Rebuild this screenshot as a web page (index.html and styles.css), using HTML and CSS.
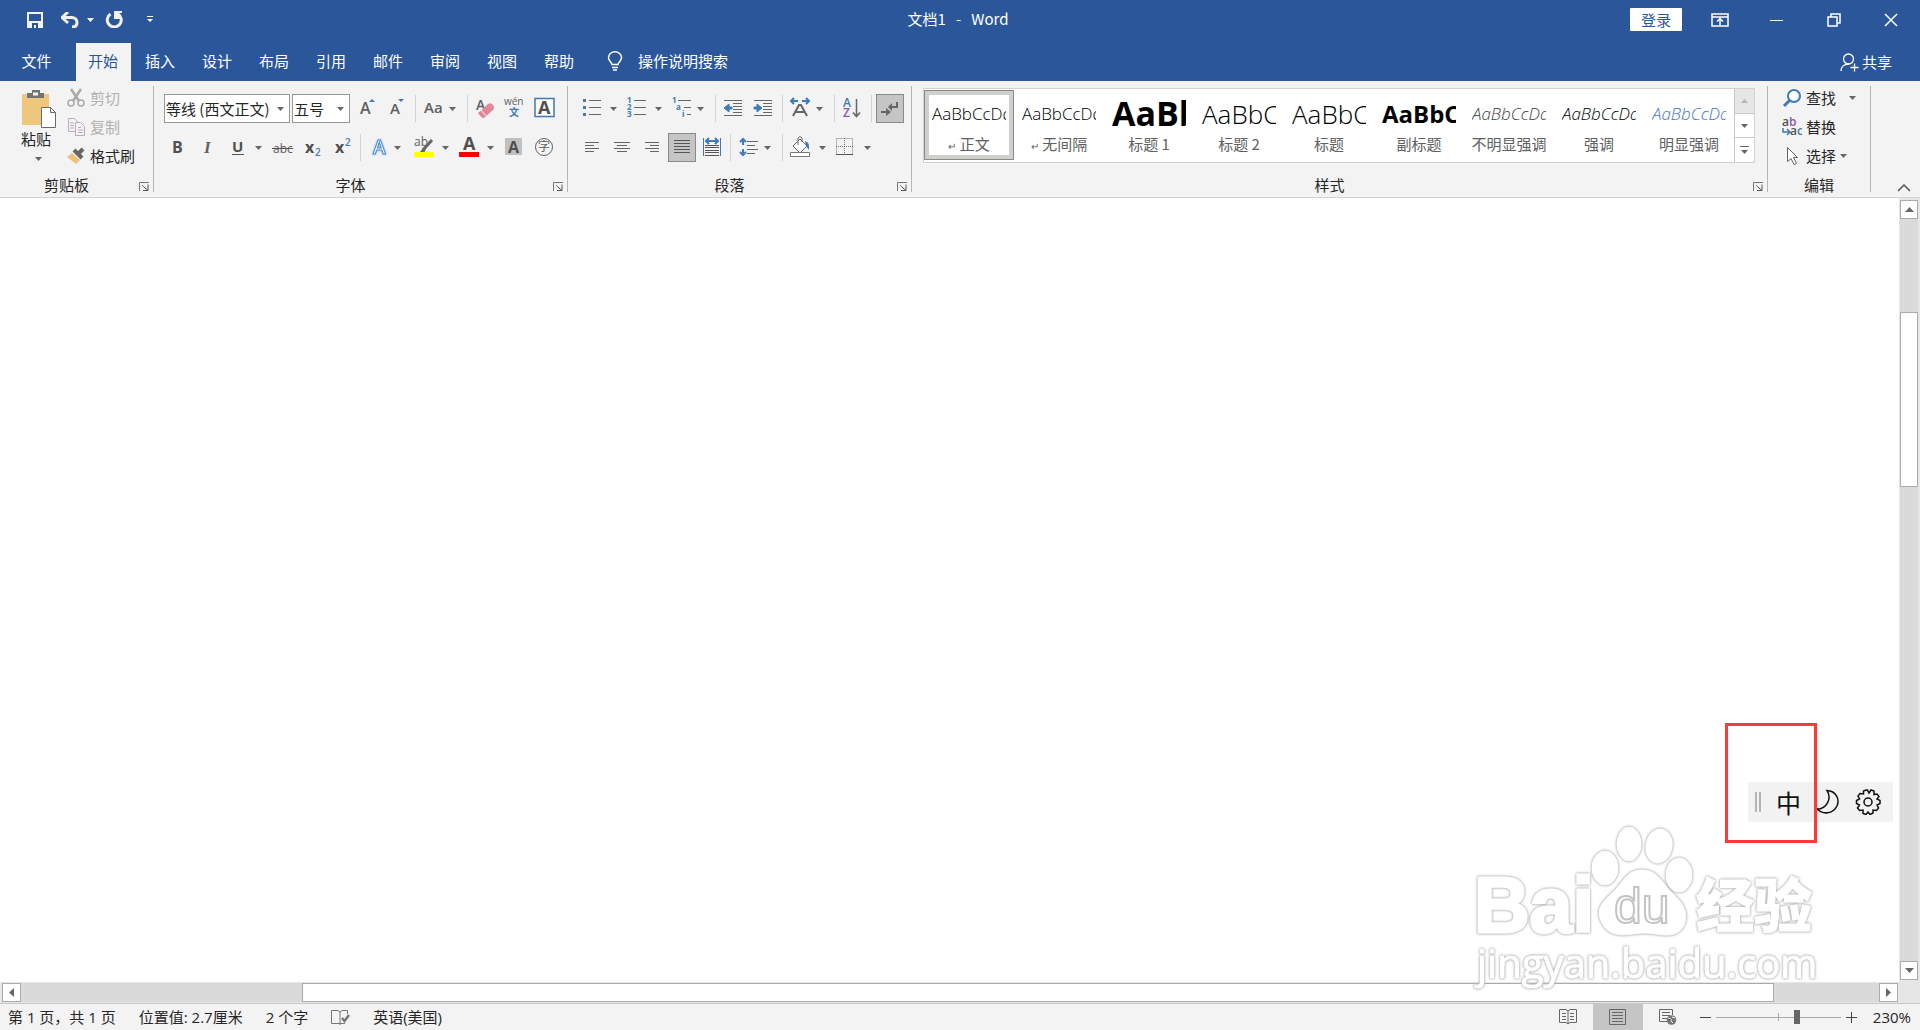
FILE: index.html
```html
<!DOCTYPE html>
<html lang="zh-CN">
<head>
<meta charset="utf-8">
<title>文档1 - Word</title>
<link rel="stylesheet" href="styles.css">
</head>
<body>
<svg class="defs" aria-hidden="true">
  <symbol id="caret" viewBox="0 0 7 4"><path d="M0 0h7L3.500 4z" fill="currentColor"/></symbol>
  <symbol id="launch" viewBox="0 0 10 9"><path d="M.5 9V.5H10M3 3l4 4" fill="none" stroke="#777"/><path d="M9 2.500V8.500H4M5 5l4 3.500" fill="none" stroke="#555"/></symbol>
</svg>

<header class="titlebar">
  <div class="quick">
    <button class="ghost save" aria-label="保存"><svg width="16" height="16"><path d="M1 1h14v14H1z" fill="none" stroke="#f2f2f2" stroke-width="2"/><path d="M2 9h12v6H2z" fill="#f2f2f2"/><path d="M5 11h6v5H9v-3H7v3H5z" fill="#2b579a"/></svg></button>
    <button class="ghost undo" aria-label="撤消"><svg width="18" height="16"><path d="M3 5.500h8q5 .5 5 5t-5 4.500" fill="none" stroke="#f2f2f2" stroke-width="3"/><path d="M7 0 1 5.500 7 11" fill="none" stroke="#f2f2f2" stroke-width="3"/></svg></button>
    <button class="ghost undo-more" aria-label="撤消列表"><svg width="7" height="4"><use href="#caret"/></svg></button>
    <button class="ghost redo" aria-label="重复"><svg width="18" height="17"><path d="M5.500 3A7 7 0 1 0 13 3" fill="none" stroke="#f2f2f2" stroke-width="3"/><path d="M9 0h8v2h-3l2 6H9z" fill="#f2f2f2"/></svg></button>
    <button class="ghost" aria-label="自定义快速访问工具栏"><svg width="6" height="7"><path d="M0 .5h6" stroke="#fff"/><path d="M0 3h6L3 6z" fill="#fff"/></svg></button>
  </div>
  <h1 class="doc-title">文档1 &nbsp;&nbsp;-&nbsp;&nbsp; Word</h1>
  <div class="window-tools">
    <button class="signin">登录</button>
    <button class="ghost win" aria-label="功能区显示选项"><svg width="18" height="14"><path d="M1 1h16v12H1zM1 4h16" fill="none" stroke="#fff" stroke-width="1.500"/><path d="M9 12V6M6 8.500 9 5.500l3 3" fill="none" stroke="#fff" stroke-width="1.500"/></svg></button>
    <button class="ghost win" aria-label="最小化"><svg width="14" height="14"><path d="M0 7.500h13" stroke="#fff"/></svg></button>
    <button class="ghost win" aria-label="还原"><svg width="14" height="14"><path d="M1 4h9v9H1zM4 4V1h9v9h-3" fill="none" stroke="#fff" stroke-width="1.500"/></svg></button>
    <button class="ghost win" aria-label="关闭"><svg width="14" height="14"><path d="m1 1 12 12M13 1 1 13" stroke="#fff" stroke-width="1.500"/></svg></button>
  </div>
</header>

<nav class="tabs">
  <button class="tab file">文件</button>
  <button class="tab active">开始</button>
  <button class="tab">插入</button>
  <button class="tab">设计</button>
  <button class="tab">布局</button>
  <button class="tab">引用</button>
  <button class="tab">邮件</button>
  <button class="tab">审阅</button>
  <button class="tab">视图</button>
  <button class="tab">帮助</button>
  <label class="tell-me">
    <svg width="16" height="20"><path d="M5 13.500C4.500 10.500 1.500 10 1.500 6.500a6.500 5.700 0 0 1 13 0c0 3.500-3 4-3.500 7z" fill="none" stroke="#fff" stroke-width="1.500"/><path d="M5 16.500h6M6 19h4" stroke="#fff" stroke-width="1.500"/></svg>
    <input type="text" placeholder="操作说明搜索" aria-label="操作说明搜索">
  </label>
  <button class="share"><svg width="19" height="19"><circle cx="8.500" cy="6" r="5" fill="none" stroke="#fff" stroke-width="1.300"/><path d="M1 18c0-4 3-7 8-7M14.500 10.500v8M10.500 14.500h8" fill="none" stroke="#fff" stroke-width="1.300"/></svg>共享</button>
</nav>

<section class="ribbon" aria-label="开始">
  <div class="group clipboard">
    <div class="clip-body">
      <button class="paste"><svg width="36" height="40"><path d="M1 5h27v31H1z" fill="#eec77d"/><path d="M6 9V4h5V1h8v3h4v5z" fill="#737373"/><path d="M12 3.500h5v3h-5z" fill="#f3f3f3"/><path d="M20.500 18.500h9l5 5v15h-14z" fill="#fff" stroke="#6b6b6b"/><path d="M29.500 18.500v5h5" fill="none" stroke="#6b6b6b"/></svg>粘贴<svg class="paste-caret" width="7" height="4"><use href="#caret"/></svg></button>
      <div class="stack">
        <button class="line" disabled><svg width="18" height="20"><path d="m4 1 8 12M14 1 6 13" stroke="#aaa" stroke-width="2.500"/><circle cx="4" cy="15" r="3" fill="none" stroke="#aaa" stroke-width="1.500"/><circle cx="14" cy="15" r="3" fill="none" stroke="#aaa" stroke-width="1.500"/></svg>剪切</button>
        <button class="line" disabled><svg width="18" height="20"><path d="M1.500 1.500h6l3 3v10h-9z" fill="#f5f2f5" stroke="#b9adb9"/><path d="M8.500 5.500h5l4 4v9h-9z" fill="#f5f2f5" stroke="#b9adb9"/><path d="M3 6h4M3 8.500h4M3 11h4M11 10.500h3M11 13h5M11 15.500h5" stroke="#b9adb9"/></svg>复制</button>
        <button class="line"><svg width="18" height="20"><path d="m0 11 5-4 8 7-4 4z" fill="#eec07c"/><path d="m7 4 8 8" stroke="#666" stroke-width="4"/><path d="m11 8 5-5" stroke="#666" stroke-width="4"/></svg>格式刷</button>
      </div>
    </div>
    <div class="group-label with-launcher">剪贴板<button class="launcher" aria-label="剪贴板设置"><svg width="10" height="9"><use href="#launch"/></svg></button></div>
  </div>

  <div class="group font">
    <div class="rows">
      <div class="row">
        <span class="combo family"><select aria-label="字体"><option>等线 (西文正文)</option></select><svg width="7" height="4"><use href="#caret"/></svg></span>
        <span class="combo size"><select aria-label="字号"><option>五号</option></select><svg width="7" height="4"><use href="#caret"/></svg></span>
        <button class="tool" aria-label="增大字号"><svg width="30" height="29"><text x="8" y="20" class="g16">A</text><path d="m17 8 3-3 3 3z" fill="#3f7ab5"/></svg></button>
        <button class="tool" aria-label="减小字号"><svg width="30" height="29"><text x="8" y="20" class="g15">A</text><path d="m16 5 3 3 3-3z" fill="#3f7ab5"/></svg></button>
        <i class="sep"></i>
        <button class="tool" aria-label="更改大小写"><svg width="30" height="29"><text x="5" y="19" class="g15">Aa</text></svg></button><button class="drop tight" aria-label="大小写选项"><svg width="7" height="4"><use href="#caret"/></svg></button>
        <i class="sep"></i>
        <button class="tool" aria-label="清除格式"><svg width="30" height="29"><text x="5" y="16" class="g14">A</text><path d="m7 19 10-9q3-2 5 1t0 5l-9 8q-3 0-6-5z" fill="#e58699"/><path d="m10 16 5 6" stroke="#f3f3f3"/></svg></button>
        <button class="tool" aria-label="拼音指南"><svg width="30" height="29"><text x="3" y="11" class="g10">wén</text><text x="8" y="22" class="b10">文</text></svg></button>
        <button class="tool" aria-label="字符边框"><svg width="30" height="29"><path d="M4 4.500h19v18H4z" fill="#fff" stroke="#3f7ab5" stroke-width="1.500"/><text x="7" y="20" class="g17 bold">A</text></svg></button>
      </div>
      <div class="row">
        <button class="tool" aria-label="加粗"><svg width="30" height="29"><text x="10" y="20" class="g16 bold">B</text></svg></button>
        <button class="tool" aria-label="倾斜"><svg width="30" height="29"><text x="12" y="20" class="serif">I</text></svg></button>
        <button class="tool" aria-label="下划线"><svg width="30" height="29"><text x="10" y="19" class="g15 bold">U</text><path d="M10 21.500h12" stroke="#555"/></svg></button><button class="drop" aria-label="下划线样式"><svg width="7" height="4"><use href="#caret"/></svg></button>
        <button class="tool" aria-label="删除线"><svg width="30" height="29"><text x="6" y="20" class="g12">abc</text><path d="M5 15.500h21" stroke="#555"/></svg></button>
        <button class="tool" aria-label="下标"><svg width="30" height="29"><text x="8" y="20" class="g16 bold">x</text><text x="18" y="23" class="b10">2</text></svg></button>
        <button class="tool" aria-label="上标"><svg width="30" height="29"><text x="8" y="20" class="g16 bold">x</text><text x="18" y="13" class="b10">2</text></svg></button>
        <i class="sep"></i>
        <button class="tool" aria-label="文本效果"><svg width="30" height="29"><text x="9" y="21" class="effect">A</text></svg></button><button class="drop tight" aria-label="文本效果选项"><svg width="7" height="4"><use href="#caret"/></svg></button>
        <button class="tool" aria-label="突出显示"><svg width="30" height="29"><text x="5" y="13" class="g12">ab</text><path d="m23 7-9 10" stroke="#666" stroke-width="3"/><path d="m15 14-5 6h5l2-4z" fill="#666"/><path d="M5 19h20v5H5z" fill="#ff0"/></svg></button><button class="drop" aria-label="突出显示颜色"><svg width="7" height="4"><use href="#caret"/></svg></button>
        <button class="tool" aria-label="字体颜色"><svg width="30" height="29"><text x="9" y="17" class="g17 bold">A</text><path d="M5 19h20v5H5z" fill="red"/></svg></button><button class="drop" aria-label="字体颜色选项"><svg width="7" height="4"><use href="#caret"/></svg></button>
        <button class="tool" aria-label="字符底纹"><svg width="30" height="29"><path d="M6 5h17v17H6z" fill="#c0c0c0"/><text x="9" y="20" class="g16 bold">A</text></svg></button>
        <button class="tool" aria-label="带圈字符"><svg width="30" height="29"><circle cx="15" cy="14" r="8.500" fill="none" stroke="#666"/><text x="9" y="18" class="g12">字</text></svg></button>
      </div>
    </div>
    <div class="group-label with-launcher">字体<button class="launcher" aria-label="字体设置"><svg width="10" height="9"><use href="#launch"/></svg></button></div>
  </div>

  <div class="group para">
    <div class="rows">
      <div class="row">
        <button class="tool" aria-label="项目符号"><svg width="30" height="29"><path d="M12 6.500h12M12 13.500h12M12 20.500h12" stroke="#666"/><path d="M6 5h3v3H6zM6 12h3v3H6zM6 19h3v3H6z" fill="#3f7ab5"/></svg></button><button class="drop" aria-label="项目符号库"><svg width="7" height="4"><use href="#caret"/></svg></button>
        <button class="tool" aria-label="编号"><svg width="30" height="29"><path d="M12 6.500h12M12 13.500h12M12 20.500h12" stroke="#666"/><text x="5" y="9" class="b7">1</text><text x="5" y="16" class="b7">2</text><text x="5" y="23" class="b7">3</text></svg></button><button class="drop" aria-label="编号库"><svg width="7" height="4"><use href="#caret"/></svg></button>
        <button class="tool" aria-label="多级列表"><svg width="30" height="29"><path d="M11 6.500h13M17 13.500h7M20 20.500h4" stroke="#666"/><text x="5" y="9" class="b7">1</text><text x="9" y="16" class="b7">a</text><text x="15" y="23" class="b7">i</text></svg></button><button class="drop tight" aria-label="多级列表库"><svg width="7" height="4"><use href="#caret"/></svg></button>
        <i class="sep"></i>
        <button class="tool" aria-label="减少缩进量"><svg width="30" height="29"><path d="M5 6.500h18M14 9.500h9M14 12.500h9M14 15.500h9M14 18.500h9M5 21.500h18" stroke="#666"/><path d="m5 14 5-4v3h3v2h-3v3z" fill="#3f7ab5" stroke="#3f7ab5"/></svg></button>
        <button class="tool" aria-label="增加缩进量"><svg width="30" height="29"><path d="M5 6.500h18M14 9.500h9M14 12.500h9M14 15.500h9M14 18.500h9M5 21.500h18" stroke="#666"/><path d="m13 14-5-4v3H5v2h3v3z" fill="#3f7ab5" stroke="#3f7ab5"/></svg></button>
        <i class="sep"></i>
        <button class="tool" aria-label="中文版式"><svg width="30" height="29"><path d="m7 22 6-11h2l6 11M9.500 18h9" fill="none" stroke="#666" stroke-width="2"/><path d="M5 7h7M16 7h7M8 4 5 7l3 3M20 4l3 3-3 3" fill="none" stroke="#3f7ab5" stroke-width="2"/></svg></button><button class="drop tight" aria-label="中文版式选项"><svg width="7" height="4"><use href="#caret"/></svg></button>
        <i class="sep"></i>
        <button class="tool" aria-label="排序"><svg width="30" height="29"><text x="5" y="13" class="b12">A</text><text x="5" y="23" class="p12">Z</text><path d="M18.500 5v17M15 18.500l3.500 4 3.500-4" fill="none" stroke="#666" stroke-width="1.500"/></svg></button>
        <i class="sep"></i>
        <button class="tool pressed" aria-label="显示编辑标记" aria-pressed="true"><svg width="26" height="27"><path d="M20 7v5h-7M4 17h6" fill="none" stroke="#666" stroke-width="2"/><path d="m15 8-4 4 4 4zM9 13l5 4-5 4z" fill="#666"/></svg></button>
      </div>
      <div class="row">
        <button class="tool" aria-label="左对齐"><svg width="30" height="29"><path d="M8 9.500h14M8 12.500h9M8 15.500h14M8 18.500h9" stroke="#666"/></svg></button>
        <button class="tool" aria-label="居中"><svg width="30" height="29"><path d="M7 9.500h16M10 12.500h10M7 15.500h16M10 18.500h10" stroke="#666"/></svg></button>
        <button class="tool" aria-label="右对齐"><svg width="30" height="29"><path d="M8 9.500h14M13 12.500h9M8 15.500h14M13 18.500h9" stroke="#666"/></svg></button>
        <button class="tool pressed" aria-label="两端对齐" aria-pressed="true"><svg width="26" height="27"><path d="M5 6.500h16M5 9.500h16M5 12.500h16M5 15.500h16M5 18.500h16" stroke="#555"/></svg></button>
        <button class="tool" aria-label="分散对齐"><svg width="30" height="29"><path d="M6.500 5v18M23.500 5v18" stroke="#3f7ab5"/><path d="M9 8h12M12 5 9 8l3 3M18 5l3 3-3 3" fill="none" stroke="#3f7ab5" stroke-width="2"/><path d="M8 12.500h14M8 14.500h14M8 17.500h14M8 19.500h14M8 22.500h14" stroke="#555"/></svg></button>
        <i class="sep"></i>
        <button class="tool" aria-label="行和段落间距"><svg width="30" height="29"><path d="M13 8.500h11M13 12.500h8M13 16.500h11M13 20.500h8" stroke="#666"/><path d="M9 7v5M9 16v5M6 9l3-3 3 3M6 19l3 3 3-3" fill="none" stroke="#3f7ac5" stroke-width="2"/></svg></button><button class="drop tight" aria-label="间距选项"><svg width="7" height="4"><use href="#caret"/></svg></button>
        <i class="sep"></i>
        <button class="tool" aria-label="底纹"><svg width="30" height="29"><path d="m14 6 7 7-7 7-7-7zM12 12V5q2-3 4 0v4" fill="#fff" stroke="#666"/><path d="M19 8q5 1 4 9l-3-4z" fill="#3f7ab5"/><path d="M4.500 19.500h19v4h-19z" fill="#fff" stroke="#777"/></svg></button><button class="drop" aria-label="底纹颜色"><svg width="7" height="4"><use href="#caret"/></svg></button>
        <button class="tool" aria-label="边框"><svg width="30" height="29"><path d="M5.500 5.500h16v16h-16zM13.500 5v17M5 13.500h17" fill="none" stroke="#777" stroke-dasharray="1 1"/><path d="M5 21.500h17" stroke="#555"/></svg></button><button class="drop" aria-label="边框选项"><svg width="7" height="4"><use href="#caret"/></svg></button>
      </div>
    </div>
    <div class="group-label with-launcher">段落<button class="launcher" aria-label="段落设置"><svg width="10" height="9"><use href="#launch"/></svg></button></div>
  </div>

  <div class="group styles">
    <div class="gallery">
      <button class="style chosen"><span class="sample">AaBbCcDd</span><span class="name"><small>↵</small> 正文</span></button>
      <button class="style"><span class="sample">AaBbCcDd</span><span class="name"><small>↵</small> 无间隔</span></button>
      <button class="style"><span class="sample heading1">AaBb</span><span class="name">标题 1</span></button>
      <button class="style"><span class="sample heading2">AaBbC</span><span class="name">标题 2</span></button>
      <button class="style"><span class="sample heading2">AaBbC</span><span class="name">标题</span></button>
      <button class="style"><span class="sample subtitle">AaBbC</span><span class="name">副标题</span></button>
      <button class="style"><span class="sample subtle">AaBbCcDd</span><span class="name">不明显强调</span></button>
      <button class="style"><span class="sample emphasis">AaBbCcDd</span><span class="name">强调</span></button>
      <button class="style"><span class="sample intense">AaBbCcDd</span><span class="name">明显强调</span></button>
      <div class="gallery-nav">
        <button disabled aria-label="上一行"><svg width="7" height="4"><path d="M0 4h7L3.500 0z" fill="#b5b5b5"/></svg></button>
        <button aria-label="下一行"><svg width="7" height="4"><use href="#caret"/></svg></button>
        <button aria-label="其他样式"><svg width="9" height="8"><path d="M0 .5h9" stroke="#666"/><path d="M1 4h7L4.500 8z" fill="#666"/></svg></button>
      </div>
    </div>
    <div class="group-label with-launcher">样式<button class="launcher" aria-label="样式设置"><svg width="10" height="9"><use href="#launch"/></svg></button></div>
  </div>

  <div class="group editing">
    <div class="stack">
      <button class="line"><svg width="20" height="20"><circle cx="12" cy="8" r="6" fill="#fff" stroke="#3f7ab5" stroke-width="2"/><path d="m8 12-6 6" stroke="#3f7ab5" stroke-width="3"/></svg>查找<svg class="find-caret" width="7" height="4"><use href="#caret"/></svg></button>
      <button class="line"><svg width="20" height="20"><text x="0" y="9" class="g12 bold">a<tspan fill="#8a5aa8">b</tspan></text><text x="8" y="18" class="g12 bold">a<tspan fill="#3f7ab5">c</tspan></text><path d="M1 11v4h6M5 12l3 3-3 3" fill="none" stroke="#3f7ab5" stroke-width="1.500"/></svg>替换</button>
      <button class="line"><svg width="20" height="20"><path d="M5.500 1.500v14l3.500-3 3 6 2.500-1-3-6h4z" fill="#fff" stroke="#666"/></svg>选择<svg width="7" height="4"><use href="#caret"/></svg></button>
    </div>
    <div class="group-label">编辑</div>
  </div>
  <button class="collapse" aria-label="折叠功能区"><svg width="14" height="8"><path d="m1 7 6-6 6 6" fill="none" stroke="#555" stroke-width="1.500"/></svg></button>
</section>

<main class="workspace">
  <div class="page" aria-label="文档"></div>
  <div class="vscroll">
    <button aria-label="向上滚动"><svg width="9" height="5"><path d="M0 5h9L4.500 0z" fill="#666"/></svg></button>
    <div class="track"><i class="v-before"></i><i class="thumb v-thumb"></i><i class="v-after"></i></div>
    <button aria-label="向下滚动"><svg width="9" height="5"><path d="M0 0h9L4.500 5z" fill="#666"/></svg></button>
  </div>
  <div class="hscroll">
    <button aria-label="向左滚动"><svg width="5" height="9"><path d="M5 0v9L0 4.500z" fill="#666"/></svg></button>
    <div class="track"><i class="h-before"></i><i class="thumb h-thumb"></i><i class="h-after"></i></div>
    <button aria-label="向右滚动"><svg width="5" height="9"><path d="M0 0v9l5-4.500z" fill="#666"/></svg></button>
  </div>
  <i class="corner"></i>

  <svg class="watermark" width="360" height="180" viewBox="0 0 360 180">
    <g class="mark">
      <text x="3" y="110" class="wm-bai">Bai</text>
      <ellipse cx="134" cy="46" rx="13" ry="17"/>
      <ellipse cx="158" cy="22" rx="12" ry="17"/>
      <ellipse cx="188" cy="24" rx="13" ry="17" transform="rotate(10 188 24)"/>
      <ellipse cx="208" cy="53" rx="13" ry="17"/>
      <path d="M171 48c-17 0-19 14-30 23-9 8-15 15-12 25 7 23 28 16 42 15s34 9 42-8c5-12-1-22-10-30-11-10-15-25-32-25z"/>
      <text x="143" y="101" class="wm-du">du</text>
      <text x="225" y="105" class="wm-cn">经验</text>
      <text x="6" y="156" class="wm-url">jingyan.baidu.com</text>
    </g>
  </svg>

  <div class="ime">
    <i class="grip"></i>
    <button class="ghost" aria-label="中文输入">中</button>
    <button class="ghost" aria-label="半角"><svg width="24" height="26"><path d="M11 1.500C16 9 11 20 1 20c6 6 16 5 20-3 3-7-1-15-10-15.500z" fill="none" stroke="#111" stroke-width="1.500"/></svg></button>
    <button class="ghost" aria-label="设置"><svg width="26" height="26" viewBox="-13 -13 26 26"><path d="M-2-12h1.500l1.500 3 2-3 3 1v3.500l3-.5 2 2.500-2 2.500 3 1.500v3l-3 1.500 1.500 3-2 2.500-3.500-.5v3l-3 1.500-2-2.500-2 2.500-3-1v-3.500l-3.500.5-2-2.500 2-3-3-1.500v-3l3-1.500-1.500-3 2-2.500 3.500.5v-3z" fill="none" stroke="#111" stroke-width="1.500"/><circle r="4" fill="none" stroke="#111" stroke-width="1.500"/></svg></button>
  </div>
  <i class="highlight"></i>
</main>

<footer class="status">
  <span>第 1 页，共 1 页</span>
  <span>位置值: 2.7厘米</span>
  <span>2 个字</span>
  <button class="ghost" aria-label="校对"><svg width="19" height="16"><path d="M9 14.500H.5v-13H7l2 1.500v13M9 3l2-1.500h5.500V5M9 14.500h5" fill="none" stroke="#777"/><path d="m11 9 2.500 3L18 6" fill="none" stroke="#777" stroke-width="2.500"/></svg></button>
  <span>英语(美国)</span>
  <div class="views">
    <button aria-label="阅读视图"><svg width="18" height="16"><path d="M.5.500H7L9 2l2-1.500h6.500v13H11L9 15l-2-1.500H.5zM9 2v13M3 4.500h4M3 7.500h4M3 10.500h4M11 4.500h4M11 7.500h4M11 10.500h4" fill="none" stroke="#666"/></svg></button>
    <button class="on" aria-label="页面视图"><svg width="18" height="16"><path d="M.5.500h16v15H.5zM3 3.500h11M3 6.500h11M3 9.500h11M3 12.500h11" fill="none" stroke="#666"/></svg></button>
    <button aria-label="Web 版式视图"><svg width="18" height="16"><path d="M9 12.500H.5V.5h13V6M3 3.500h8M3 6.500h8M3 9.500h5" fill="none" stroke="#666"/><circle cx="12.500" cy="11" r="4.800" fill="#777"/><path d="m9 9 3 1v2l2 2M13 8l3 1" stroke="#f3f3f3"/></svg></button>
  </div>
  <div class="zoom-bar">
    <button class="ghost" aria-label="缩小"><svg width="11" height="11"><path d="M0 5.500h11" stroke="#444"/></svg></button>
    <input class="zoom" type="range" min="0" max="100" value="66" aria-label="显示比例">
    <button class="ghost" aria-label="放大"><svg width="11" height="11"><path d="M0 5.500h11M5.500 0v11" stroke="#444"/></svg></button>
  </div>
  <span class="percent">230%</span>
</footer>
</body>
</html>
```
FILE: styles.css
```css
* { box-sizing: border-box; }
html, body { height: 100%; }
body {
  margin: 0;
  display: flex;
  flex-direction: column;
  overflow: hidden;
  background: #fff;
  color: #262626;
  font: 400 15px/20px "Noto Sans CJK SC", sans-serif;
}
button, input, select { font: inherit; color: inherit; border: 0; padding: 0; margin: 0; background: none; border-radius: 0; }
svg { display: block; flex: none; }
.defs { position: absolute; width: 0; height: 0; }
.ghost { display: flex; align-items: center; justify-content: center; }
i { display: block; }

/* title bar */
.titlebar {
  height: 43px;
  padding-bottom: 4px;
  display: grid;
  grid-template-columns: 1fr auto 1fr;
  align-items: center;
  background: #2b579a;
  color: #fff;
}
.quick { display: flex; align-items: center; padding-left: 27px; }
.save { margin-right: 18px; }
.undo { margin-right: 8px; }
.undo-more { margin-right: 11px; }
.redo { margin-right: 24px; }
.doc-title { margin: 0; padding: 0 4px 2px 0; font-size: 15px; font-weight: 400; }
.window-tools { display: flex; align-items: center; justify-content: flex-end; padding-right: 1px; }
.signin { width: 52px; height: 23px; margin-right: 9px; background: #fff; color: #2b579a; line-height: 22px; border-radius: 1px; }
.win { width: 57px; height: 32px; }

/* tabs */
.tabs { height: 38px; display: flex; gap: 2px; background: #2b579a; color: #fff; }
.tab { width: 55px; padding: 0 1px 2px 0; }
.file { width: 74px; }
.active { background: #f3f3f3; color: #2b579a; }
.tell-me { display: flex; align-items: center; gap: 15px; padding: 0 0 2px 18px; }
.tell-me input { width: 140px; outline: 0; }
.tell-me input::placeholder { color: #fff; opacity: 1; }
.share { margin-left: auto; padding-right: 28px; display: flex; align-items: center; gap: 3px; }

/* ribbon */
.ribbon { flex: none; display: flex; padding: 5px 0; height: 117px; background: #f3f3f3; border-bottom: 1px solid #d2d2d2; color: #262626; }
.ribbon svg { color: #666; }
.group { display: flex; flex-direction: column; justify-content: space-between; border-right: 1px solid #b5b5b5; }
.group-label { display: flex; justify-content: center; position: relative; padding-top: 2px; line-height: 14px; }
.with-launcher { padding-right: 20px; }
.launcher { position: absolute; right: 4px; bottom: 1px; }
.rows { display: flex; flex-direction: column; gap: 10px; padding-top: 8px; }
.row { display: flex; align-items: center; height: 29px; }
.clipboard { width: 154px; }
.clip-body { display: flex; gap: 10px; padding-left: 21px; }
.paste { display: flex; flex-direction: column; align-items: flex-start; width: 36px; padding-top: 3px; line-height: 20px; }
.paste-caret { margin: 8px 0 0 14px; }
.stack { display: flex; flex-direction: column; }
.line { display: flex; align-items: center; gap: 5px; height: 29px; padding-bottom: 6px; white-space: nowrap; }
.line:disabled { color: #b1b1b1; }
.font { width: 414px; }
.font .rows { padding-left: 8px; }
.font .row:first-child { padding-left: 2px; }
.combo { display: grid; align-items: center; height: 29px; border: 1px solid #999; background: #fff; margin-right: 2px; }
.combo select, .combo svg { grid-area: 1 / 1; }
.combo select { appearance: none; width: 100%; padding-left: 1px; outline: 0; }
.combo svg { justify-self: end; margin-right: 5px; pointer-events: none; }
.family { width: 126px; }
.size { width: 58px; }
.tool { width: 30px; height: 29px; display: flex; flex: none; }
.drop { width: 15px; height: 29px; display: flex; flex: none; align-items: center; justify-content: center; padding-right: 2px; }
.drop.tight { justify-content: flex-start; }
.sep { width: 1px; height: 27px; margin: 0 3px; background: #d2d2d2; flex: none; }
.pressed { width: 28px; margin: 0 1px; border: 1px solid #8a8a8a; background: #c5c5c5; }
.para { width: 344px; }
.para .rows { padding-left: 9px; }

/* lettered icons */
.ribbon text { font-family: "Open Sans", "Noto Sans CJK SC", sans-serif; font-weight: 600; fill: #606060; }
.ribbon .bold { font-weight: 700; fill: #505050; }
.ribbon .g10 { font-size: 10px; font-weight: 400; }
.ribbon .g12 { font-size: 12px; font-weight: 400; }
.ribbon .g12.bold { font-weight: 600; }
.ribbon .g14 { font-size: 14px; }
.ribbon .g15 { font-size: 15px; }
.ribbon .g16 { font-size: 16px; }
.ribbon .g17 { font-size: 18px; }
.ribbon .b7 { font-size: 8px; fill: #3f7ab5; font-weight: 700; }
.ribbon .b10 { font-size: 10px; fill: #3f7ab5; }
.ribbon .b12 { font-size: 12px; fill: #3f7ab5; }
.ribbon .p12 { font-size: 12px; fill: #8a5aa8; }
.ribbon .serif { font: italic 700 17px "Liberation Serif", serif; }
.ribbon .effect { font-size: 19px; fill: #fff; stroke: #4a8cd0; stroke-width: 1px; filter: drop-shadow(0 0 1px #7fb2e6); }

/* style gallery */
.styles { width: 856px; }
.gallery { display: flex; width: 832px; height: 75px; margin: 2px 0 0 11px; background: #fff; border: 1px solid #d2d2d2; }
.style { width: 90px; height: 70px; margin-top: 1px; padding: 5px 8px 0; display: flex; flex-direction: column; border: 0; }
.chosen { outline: 1px solid #8a8a86; outline-offset: -1px; box-shadow: inset 0 0 0 5px #cfcfcb; }
.sample { width: 74px; overflow: hidden; white-space: nowrap; text-align: left; color: #000; font: 300 17px/38px "Open Sans", sans-serif; }
.heading1 { font-size: 34px; line-height: 36px; padding-bottom: 2px; font-weight: 700; }
.heading2 { font-size: 26px; }
.subtitle { font-size: 24px; font-weight: 700; }
.subtle { color: #404040; font-style: italic; }
.emphasis { font-style: italic; }
.intense { color: #4472c4; font-style: italic; }
.name { align-self: center; color: #606060; line-height: 22px; white-space: nowrap; }
.name small { font-size: 10px; }
.gallery-nav { display: flex; flex-direction: column; width: 20px; border-left: 1px solid #c8c8c8; }
.gallery-nav button { flex: 1; display: flex; align-items: center; justify-content: center; }
.gallery-nav button + button { border-top: 1px solid #c8c8c8; }
.gallery-nav button:disabled { background: #e6e6e6; }
.editing { width: 103px; }
.editing .stack { padding-left: 14px; }
.editing .line { gap: 4px; }
.find-caret { margin-left: 9px; }
.collapse { margin: auto 9px 0 auto; height: 8px; }

/* document area */
.workspace { flex: 1; min-height: 0; position: relative; display: grid; grid-template: 1fr 21px / 1fr 21px; background: #fff; }
.vscroll, .hscroll { display: flex; background: #e6e6e6; }
.vscroll { flex-direction: column; padding: 2px; padding-left: 1px; }
.hscroll { padding: 1px 1px 1px 2px; }
.vscroll button, .hscroll button { width: 19px; height: 19px; flex: none; display: flex; align-items: center; justify-content: center; border: 1px solid #ababab; background: #fff; }
.vscroll button { width: 18px; }
.track { flex: 1; display: flex; background: #dadada; }
.vscroll .track { flex-direction: column; }
.thumb { background: #fff; border: 1px solid #ababab; }
.v-before { flex: 93; }
.v-thumb { flex: 174; }
.v-after { flex: 475; }
.h-before { flex: 281; }
.h-thumb { flex: 1471; }
.h-after { flex: 105; }
.corner { background: #e6e6e6; }

.watermark { position: absolute; right: 89px; bottom: 1px; overflow: visible; }
.mark { fill: #fff; stroke: #fff; stroke-width: 1px; filter: drop-shadow(0 0 1px #b0b0b0) drop-shadow(0 0 1px #c8c8c8); }
.wm-bai { font: 700 77px "Liberation Sans", sans-serif; stroke-width: 3px; }
.wm-du { font: 400 50px "Liberation Sans", sans-serif; stroke: #c4c4c4; stroke-width: 2px; }
.wm-cn { font: 900 58px "Noto Sans CJK SC", sans-serif; }
.wm-url { font: 400 40px "Open Sans", sans-serif; }

.ime { position: absolute; right: 27px; bottom: 181px; width: 145px; height: 40px; display: flex; align-items: center; gap: 15px; padding-left: 7px; background: #f2f2f2; color: #111; font-size: 25px; }
.grip { width: 6px; height: 20px; border: solid #b5b5b5; border-width: 0 2px; }
.highlight { position: absolute; right: 103px; bottom: 160px; width: 92px; height: 120px; border: 3px solid #ff3838; }

/* status bar */
.status { height: 27px; flex: none; display: flex; align-items: center; padding: 0 9px 0 8px; background: #f3f3f3; border-top: 1px solid #c8c8c8; white-space: nowrap; gap: 23px; font-family: "Open Sans", "Noto Sans CJK SC", sans-serif; }
.views { display: flex; height: 100%; margin-left: auto; }
.views button { width: 50px; display: flex; align-items: center; justify-content: center; }
.views .on { background: #c5c5c5; }
.zoom-bar { display: flex; align-items: center; gap: 5px; margin: 0 -7px 0 -16px; }
.zoom {
  appearance: none;
  width: 125px;
  height: 14px;
  background:
    linear-gradient(#aaa, #aaa) 62px 3px / 1px 8px no-repeat,
    linear-gradient(#aaa, #aaa) 0 7px / 100% 1px no-repeat;
}
.zoom::-webkit-slider-thumb { appearance: none; width: 6px; height: 14px; background: #666; }
```
